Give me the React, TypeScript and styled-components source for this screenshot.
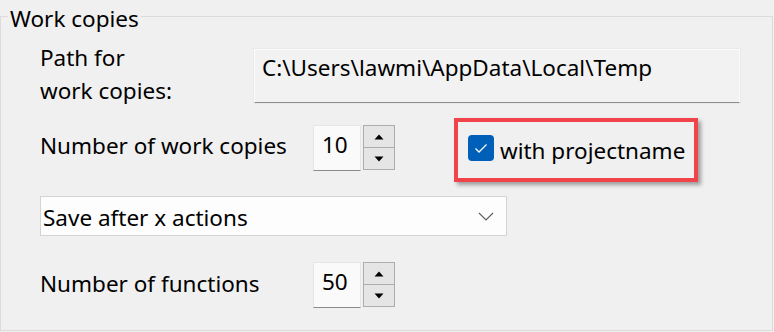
import React from "react";
import styled, { createGlobalStyle } from "styled-components";

const Global = createGlobalStyle`
  html, body { margin: 0; padding: 0; background: #f0f0f0; }
  body {
    font-family: "Noto Sans", "Open Sans", sans-serif;
    font-size: 22.5px;
    color: #000;
    width: 774px;
    height: 332px;
    overflow: hidden;
  }
`;

const Group = styled.fieldset`
  box-sizing: border-box;
  margin: 0;
  padding: 0;
  width: 773px;
  height: 331px;
  border: 1px solid #dcdcdc;
  min-inline-size: 0;
`;

const Legend = styled.legend`
  margin-left: 7px;
  padding: 5px 2px 0;
  line-height: 27px;
`;

const Content = styled.div`
  display: flex;
  flex-direction: column;
  padding: 9px 0 0 39px;
`;

const Row = styled.div<{ $mt?: number }>`
  display: flex;
  align-items: flex-start;
  margin-top: ${(p) => p.$mt ?? 0}px;
`;

const Label = styled.div<{ $w: number; $mt?: number; $lh?: number }>`
  width: ${(p) => p.$w}px;
  flex: none;
  margin-top: ${(p) => p.$mt ?? 0}px;
  line-height: ${(p) => p.$lh ?? 26}px;
  white-space: nowrap;
`;

const PathBox = styled.div`
  box-sizing: border-box;
  margin-top: 8px;
  width: 486px;
  height: 54px;
  padding: 5px 7px 0;
  line-height: 26px;
  background: #f2f2f2;
  border: 1px solid #fbfbfb;
  border-bottom-color: #8c8c8c;
  box-shadow: 0 0 0 0.5px #e2e2e2;
`;

const Spin = styled.div<{ $mt?: number }>`
  display: flex;
  gap: 2px;
  margin-top: ${(p) => p.$mt ?? 0}px;
`;

const SpinField = styled.div`
  box-sizing: border-box;
  width: 48px;
  height: 46px;
  padding: 6px 0 0 8px;
  line-height: 26px;
  background: #fafafa;
  border: 1px solid #e6e6e6;
  border-bottom-color: #8a8a8a;
`;

const SpinButtons = styled.div`
  display: flex;
  flex-direction: column;
  width: 32px;
`;

const SpinButton = styled.div<{ $h: number; $top?: boolean }>`
  box-sizing: border-box;
  height: ${(p) => p.$h}px;
  display: flex;
  align-items: center;
  justify-content: center;
  background: #e5e5e5;
  border: 1px solid #adadad;
  border-top-width: ${(p) => (p.$top ? 1 : 0)}px;
`;

const Highlight = styled.div`
  box-sizing: border-box;
  margin-left: 59px;
  width: 244px;
  height: 64px;
  border: 4px solid #f0434a;
  box-shadow: 3px 3px 4px rgba(0, 0, 0, 0.35);
  display: flex;
  align-items: flex-start;
  padding: 13px 0 0 10px;
  gap: 6px;
`;

const CheckBox = styled.div`
  width: 26px;
  height: 26px;
  flex: none;
  border-radius: 4px;
  background: #005fb8;
  display: flex;
  align-items: center;
  justify-content: center;
`;

const CheckText = styled.div`
  line-height: 26px;
  margin-top: 3px;
  white-space: nowrap;
`;

const Select = styled.div`
  box-sizing: border-box;
  width: 467px;
  height: 40px;
  padding: 8px 12px 0 2px;
  line-height: 26px;
  background: #fdfdfd;
  border: 1px solid #d4d4d4;
  display: flex;
  align-items: flex-start;
  justify-content: space-between;
`;

const Chevron = styled.svg`
  margin-top: 7px;
`;

const Up = () => (
  <svg width="10" height="6" viewBox="0 0 10 6">
    <path d="M5 0.5 L9.5 5.5 L0.5 5.5 Z" fill="#000" />
  </svg>
);
const Down = () => (
  <svg width="10" height="6" viewBox="0 0 10 6">
    <path d="M0.5 0.5 L9.5 0.5 L5 5.5 Z" fill="#000" />
  </svg>
);

const SpinBox = ({ value, mt }: { value: string; mt?: number }) => (
  <Spin $mt={mt}>
    <SpinField>{value}</SpinField>
    <SpinButtons>
      <SpinButton $h={23} $top>
        <Up />
      </SpinButton>
      <SpinButton $h={22}>
        <Down />
      </SpinButton>
    </SpinButtons>
  </Spin>
);

export default function App() {
  return (
    <>
      <Global />
      <Group>
        <Legend>Work copies</Legend>
        <Content>
          <Row>
            <Label $w={214} $lh={33}>
              Path for
              <br />
              work copies:
            </Label>
            <PathBox>C:\Users\lawmi\AppData\Local\Temp</PathBox>
          </Row>
          <Row $mt={11}>
            <Label $w={273} $mt={15}>
              Number of work copies
            </Label>
            <SpinBox value="10" mt={7} />
            <Highlight>
              <CheckBox>
                <svg width="16" height="12" viewBox="0 0 16 12">
                  <path d="M2.5 6.5 L6 10 L13.5 2.5" fill="none" stroke="#fff" strokeWidth="1.3" />
                </svg>
              </CheckBox>
              <CheckText>with projectname</CheckText>
            </Highlight>
          </Row>
          <Row $mt={14}>
            <Select>
              <span>Save after x actions</span>
              <Chevron width="16" height="9" viewBox="0 0 16 9">
                <path d="M1 1 L8 8 L15 1" fill="none" stroke="#5f5f5f" strokeWidth="1.2" />
              </Chevron>
            </Select>
          </Row>
          <Row $mt={26}>
            <Label $w={273} $mt={9}>
              Number of functions
            </Label>
            <SpinBox value="50" />
          </Row>
        </Content>
      </Group>
    </>
  );
}
